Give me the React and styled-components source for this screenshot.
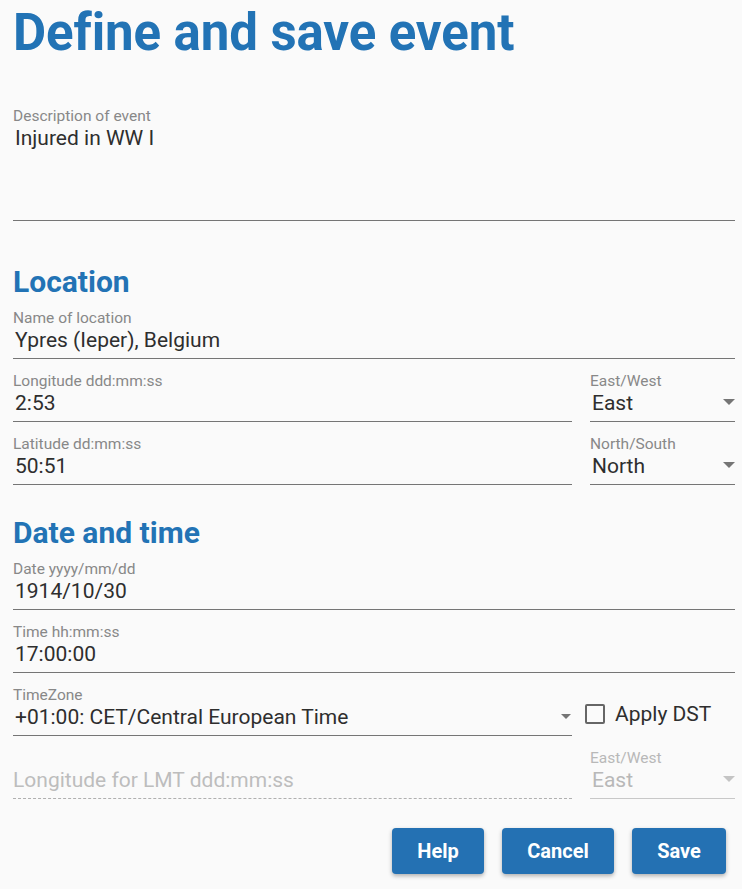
import React from 'react';
import styled, { createGlobalStyle } from 'styled-components';

const GlobalStyle = createGlobalStyle`
  html, body {
    margin: 0;
    padding: 0;
    background: #fafafa;
    font-family: Roboto, 'Liberation Sans', sans-serif;
  }
`;

const Page = styled.div`
  padding: 0 7px 14px 13px;
  width: 742px;
  box-sizing: border-box;
  color: #333;
`;

const Title = styled.h1`
  margin: 0;
  padding-top: 3px;
  font-size: 51px;
  line-height: 60px;
  font-weight: 700;
  color: #2273b5;
  letter-spacing: -0.1px;
`;

const Section = styled.h2`
  margin: ${p => p.top || 0}px 0 0;
  font-size: 30px;
  line-height: 34px;
  font-weight: 700;
  color: #2273b5;
`;

const Row = styled.div`
  display: flex;
  align-items: flex-end;
  gap: 18px;
  margin-top: ${p => p.top ?? 14}px;
`;

const Field = styled.label`
  display: flex;
  flex-direction: column;
  flex: ${p => (p.narrow ? '0 0 145px' : '1 1 auto')};
  min-width: 0;
  padding-bottom: 5px;
  border-bottom: 1px ${p => (p.disabled ? 'dashed' : 'solid')} ${p => (p.disabled ? '#b0b0b0' : '#757575')};
  position: relative;
`;

const Label = styled.span`
  font-size: 15.5px;
  line-height: 17px;
  color: ${p => (p.disabled ? '#b8b8b8' : '#888')};
  white-space: nowrap;
`;

const Value = styled.span`
  font-size: 21px;
  line-height: 26px;
  padding-left: 2px;
  min-height: ${p => p.tall || 26}px;
  color: ${p => (p.disabled ? '#b8b8b8' : '#2e2e2e')};
  white-space: nowrap;
`;

const Placeholder = styled.span`
  font-size: 21px;
  line-height: 26px;
  margin-top: 17px;
  color: #bdbdbd;
`;

const SelectBox = styled(Field)`
  border-bottom-style: solid;
  border-bottom-color: ${p => (p.disabled ? '#c8c8c8' : '#757575')};
`;

const Arrow = styled.span`
  position: absolute;
  right: ${p => p.right ?? 0}px;
  bottom: 16px;
  width: 0;
  height: 0;
  border-left: ${p => p.size || 6}px solid transparent;
  border-right: ${p => p.size || 6}px solid transparent;
  border-top: ${p => p.size || 6}px solid ${p => (p.disabled ? '#c4c4c4' : '#757575')};
`;

const Check = styled.div`
  flex: 0 0 150px;
  margin-left: -5px;
  display: flex;
  align-items: center;
  gap: 10px;
  align-self: flex-start;
  margin-top: 15px;
  font-size: 21px;
  color: #2e2e2e;
`;

const Box = styled.span`
  width: 16px;
  height: 16px;
  border: 2px solid #666;
  border-radius: 2px;
`;

const Buttons = styled.div`
  display: flex;
  justify-content: flex-end;
  gap: 18px;
  margin-top: 29px;
  padding-right: 9px;
`;

const Button = styled.button`
  height: 46px;
  padding: 0;
  width: ${p => p.w}px;
  border: none;
  border-radius: 4px;
  background: #2471b3;
  color: #fff;
  font-family: Roboto, 'Liberation Sans', sans-serif;
  font-size: 20px;
  font-weight: 700;
  box-shadow: 0 2px 4px rgba(0, 0, 0, 0.3);
`;

const Text = ({ label, value, tall, top }) => (
  <Row top={top}>
    <Field>
      <Label>{label}</Label>
      <Value tall={tall}>{value}</Value>
    </Field>
  </Row>
);

const Select = ({ label, value, disabled }) => (
  <SelectBox narrow disabled={disabled}>
    <Label disabled={disabled}>{label}</Label>
    <Value disabled={disabled}>{value}</Value>
    <Arrow disabled={disabled} />
  </SelectBox>
);

export default function App() {
  return (
    <Page>
      <GlobalStyle />
      <Title>Define and save event</Title>
      <Text top={45} label="Description of event" value="Injured in WW I" tall={90} />

      <Section top={44}>Location</Section>
      <Text top={11} label="Name of location" value="Ypres (Ieper), Belgium" />
      <Row>
        <Field>
          <Label>Longitude ddd:mm:ss</Label>
          <Value>2:53</Value>
        </Field>
        <Select label="East/West" value="East" />
      </Row>
      <Row>
        <Field>
          <Label>Latitude dd:mm:ss</Label>
          <Value>50:51</Value>
        </Field>
        <Select label="North/South" value="North" />
      </Row>

      <Section top={31}>Date and time</Section>
      <Text top={11} label="Date yyyy/mm/dd" value="1914/10/30" />
      <Text label="Time hh:mm:ss" value="17:00:00" />
      <Row>
        <Field>
          <Label>TimeZone</Label>
          <Value>+01:00: CET/Central European Time</Value>
          <Arrow right={1} size={5} />
        </Field>
        <Check>
          <Box />
          Apply DST
        </Check>
      </Row>
      <Row>
        <Field disabled>
          <Placeholder>Longitude for LMT ddd:mm:ss</Placeholder>
        </Field>
        <Select label="East/West" value="East" disabled />
      </Row>

      <Buttons>
        <Button w={92}>Help</Button>
        <Button w={112}>Cancel</Button>
        <Button w={94}>Save</Button>
      </Buttons>
    </Page>
  );
}
